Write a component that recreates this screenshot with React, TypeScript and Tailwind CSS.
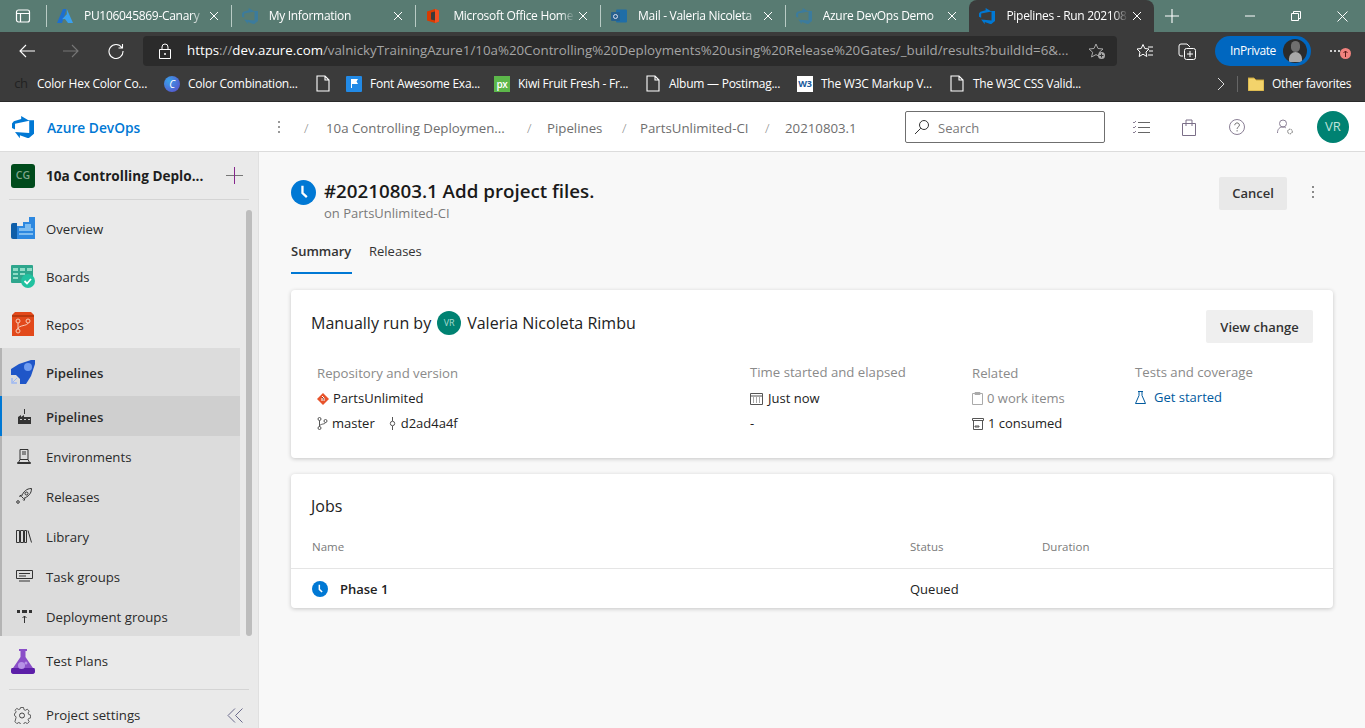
import React from "react";

const Clock = ({ size }: { size: number }) => (
  <svg width={size} height={size} viewBox="0 0 24 24" className="shrink-0">
    <circle cx="12" cy="12" r="12" fill="#0078d4" />
    <path d="M11 5.5v7l4.2 4" stroke="#fff" strokeWidth="2.2" fill="none" />
  </svg>
);

const DevOps = ({ size, color = "#0078d4" }: { size: number; color?: string }) => (
  <svg width={size} height={size} viewBox="0 0 24 24" className="shrink-0">
    <path fill={color} d="M24 4.5v14.9l-6 5-9.4-3.4v3.3l-5.3-6.9 15.5 1.2V4.5zM18.8 5.3 10 0v3.3L2 5.7 0 8.3v4.9l3.3 1.5V8.4z" />
  </svg>
);

const FileIcon = () => (
  <svg width="14" height="17" viewBox="0 0 14 17" className="shrink-0">
    <path d="M1 1h8l4 4v11H1z M9 1v4h4" fill="none" stroke="#fff" strokeWidth="1.1" />
  </svg>
);

const Tab = ({ icon, label, active }: { icon: React.ReactNode; label: string; active?: boolean }) => (
  <div className={`relative flex h-8 w-[184.7px] shrink-0 items-center pl-[10px] ${active ? "rounded-t-lg bg-[#3b3b3b]" : "border-l border-[#a9bdb7]/70 [border-image:linear-gradient(transparent_18%,#b9cbc5_18%,#b9cbc5_82%,transparent_82%)_1]"}`}>
    <span className={`flex shrink-0 justify-start ${active ? "w-[27px]" : "w-[17px]"}`}>{icon}</span>
    <span className={`w-[122px] overflow-hidden whitespace-nowrap text-[12px] tracking-[-0.3px] text-white [mask-image:linear-gradient(90deg,#000_88%,transparent)] ${active ? "" : "ml-[10px]"}`}>{label}</span>
    <svg width="10" height="10" viewBox="0 0 10 10" className="ml-auto mr-[12px] shrink-0">
      <path d="M1 1l8 8M9 1l-8 8" stroke="#fff" strokeWidth="1" />
    </svg>
  </div>
);

const Bookmark = ({ icon, label, w }: { icon: React.ReactNode; label: string; w: number }) => (
  <div className="flex items-center gap-[8px] whitespace-nowrap text-[12px] tracking-[-0.25px] text-white" style={{ width: w }}>
    <span className="flex w-[16px] shrink-0 justify-center">{icon}</span>
    <span>{label}</span>
  </div>
);

const NavItem = ({ icon, label, bold }: { icon: React.ReactNode; label: string; bold?: boolean }) => (
  <div className="flex h-[48px] items-center pl-[11px]">
    <span className="flex w-[24px] shrink-0 justify-center">{icon}</span>
    <span className={`ml-[11px] mt-[4px] text-[13.2px] text-[#2b2b2b] ${bold ? "font-semibold" : ""}`}>{label}</span>
  </div>
);

const SubItem = ({ icon, label, selected }: { icon: React.ReactNode; label: string; selected?: boolean }) => (
  <div className={`flex h-[40px] items-center border-l-2 pl-[12px] ${selected ? "border-[#0078d4] bg-[#cfcfcf]" : "border-[#b4b4b4]"}`}>
    <span className="flex w-[20px] shrink-0 justify-center">{icon}</span>
    <span className={`ml-[12px] mt-[4px] text-[13.2px] text-[#2b2b2b] ${selected ? "font-semibold" : ""}`}>{label}</span>
  </div>
);

const stroke = { fill: "none", stroke: "#333", strokeWidth: 1 };

const App = () => (
  <div className="flex h-[728px] w-[1365px] flex-col overflow-hidden bg-[#f8f8f8] font-['Open_Sans',sans-serif]">
    {/* tab strip */}
    <div className="flex h-8 shrink-0 items-center bg-[#587b72] text-white">
      <div className="flex w-[46px] shrink-0 justify-center">
        <svg width="16" height="16" viewBox="0 0 16 16">
          <rect x="1.5" y="2" width="13" height="12" rx="2" fill="none" stroke="#fff" strokeWidth="1.2" />
          <path d="M2 5.5h12M5.5 5.5V14" stroke="#fff" strokeWidth="1.2" fill="none" />
        </svg>
      </div>
      <Tab label="PU106045869-Canary" icon={<svg width="16" height="16" viewBox="0 0 16 16"><path d="M6 1h3.5L5 15H0z" fill="#1d6fd0" /><path d="M9.8 1 16 15h-5L8 11l-3 .2 4.8-5z" fill="#3aa0f0" /></svg>} />
      <Tab label="My Information" icon={<span className="opacity-60"><DevOps size={16} color="#2a7cb8" /></span>} />
      <Tab label="Microsoft Office Home" icon={<svg width="14" height="16" viewBox="0 0 14 16"><path d="M1 3.5 9 1l4 1.5v11L9 15l-8-2.5z" fill="#d83b01" /><path d="M5 4.5 9 3.5v9l-4-1z" fill="#3b3b3b" /><path d="M9 1l4 1.5v11L9 15z" fill="#f25022" /></svg>} />
      <Tab label="Mail - Valeria Nicoleta" icon={<svg width="16" height="16" viewBox="0 0 16 16"><rect x="5" y="1.5" width="11" height="13" rx="1" fill="#1f6ea8" /><rect x="0" y="4" width="9" height="9" rx="1" fill="#28618e" /><circle cx="4.5" cy="8.5" r="2" fill="none" stroke="#dde" strokeWidth="1" /></svg>} />
      <Tab label="Azure DevOps Demo" icon={<span className="opacity-60"><DevOps size={16} color="#2a7cb8" /></span>} />
      <Tab active label="Pipelines - Run 202108" icon={<DevOps size={16} />} />
      <div className="flex w-[36px] shrink-0 justify-center">
        <svg width="14" height="14" viewBox="0 0 14 14"><path d="M7 0v14M0 7h14" stroke="#fff" strokeWidth="1.1" /></svg>
      </div>
      <div className="ml-auto flex items-center">
        <span className="flex w-[46px] justify-center"><svg width="10" height="10" viewBox="0 0 10 10"><path d="M0 5h10" stroke="#fff" /></svg></span>
        <span className="flex w-[46px] justify-center"><svg width="10" height="10" viewBox="0 0 10 10"><path d="M.5 2.5h7v7h-7zM2.5 2.5v-2h7v7h-2" stroke="#fff" fill="none" /></svg></span>
        <span className="flex w-[46px] justify-center"><svg width="11" height="11" viewBox="0 0 11 11"><path d="M.5.5l10 10M10.5.5l-10 10" stroke="#fff" /></svg></span>
      </div>
    </div>

    {/* toolbar */}
    <div className="flex h-[34px] shrink-0 items-center bg-[#3b3b3b] pt-[4px]">
      <div className="flex w-[143px] shrink-0 items-center">
        <span className="flex w-[53px] justify-center"><svg width="16" height="14" viewBox="0 0 16 14"><path d="M16 7H1M7 1 1 7l6 6" stroke="#fff" fill="none" strokeWidth="1.1" /></svg></span>
        <span className="flex w-[36px] justify-center"><svg width="16" height="14" viewBox="0 0 16 14"><path d="M0 7h15M9 1l6 6-6 6" stroke="#777" fill="none" strokeWidth="1.1" /></svg></span>
        <span className="flex w-[54px] justify-center"><svg width="16" height="16" viewBox="0 0 16 16"><path d="M13.8 4.5A7 7 0 1 0 15 8M14.5 1v4h-4" stroke="#fff" fill="none" strokeWidth="1.1" /></svg></span>
      </div>
      <div className="flex h-[30px] w-[974px] shrink-0 items-center rounded-[4px] bg-[#2b2b2b] pl-[16px]">
        <svg width="12" height="16" viewBox="0 0 12 16" className="shrink-0"><path d="M3 6V4a3 3 0 0 1 6 0v2M.5 6.5h11v9H.5z" stroke="#fff" fill="none" /><circle cx="6" cy="11" r="1" fill="#fff" /></svg>
        <span className="ml-[16px] w-[890px] overflow-hidden whitespace-nowrap text-[13.3px] text-[#a5a5a5]">
          <span className="text-white">https</span>://<span className="text-white">dev.azure.com</span>/valnickyTrainingAzure1/10a%20Controlling%20Deployments%20using%20Release%20Gates/_build/results?buildId=6&amp;...
        </span>
        <svg width="18" height="18" viewBox="0 0 18 18" className="ml-auto mr-[11px] shrink-0"><path d="M8 2l2 4.5 5 .5-3.700 3.300L12.500 15 8 12.600 3.500 15l1.200-4.700L1 7l5-.5z" stroke="#aaa" fill="none" /><circle cx="13.500" cy="13.500" r="3.500" fill="#aaa" /><path d="M11.500 13.500h4M13.500 11.500v4" stroke="#333" /></svg>
      </div>
      <span className="ml-[19px] flex w-[18px] justify-center">
        <svg width="18" height="16" viewBox="0 0 18 16"><path d="M7 1.500l1.800 4 4.200.5-3 3 .8 4.500L7 11.200 3.200 13.500 4 9 1 6l4.200-.5z" stroke="#fff" fill="none" /><path d="M12 4h5M13 8h4M12 12h5" stroke="#fff" /></svg>
      </span>
      <span className="ml-[24px] flex w-[18px] justify-center">
        <svg width="18" height="17" viewBox="0 0 18 17"><path d="M5 13H3a2 2 0 0 1-2-2V3a2 2 0 0 1 2-2h6l3 3" stroke="#fff" fill="none" /><rect x="6.500" y="5.500" width="11" height="11" rx="2" stroke="#fff" fill="none" /><path d="M12 8v6M9 11h6" stroke="#fff" /></svg>
      </span>
      <div className="ml-[19px] flex h-[30px] w-[96px] items-center rounded-full bg-[#0067c0] pl-[15px] pr-[4px]">
        <span className="text-[12px] tracking-[-0.4px] text-white">InPrivate</span>
        <span className="ml-auto flex h-[24px] w-[24px] flex-col items-center justify-center overflow-hidden rounded-full bg-[#2b2b2b]">
          <span className="h-[11px] w-[9px] rounded-full bg-[#6f6f6f]" />
          <span className="h-[10px] w-[13px] rounded-t-full bg-[#a8a8a8]" />
        </span>
      </div>
      <div className="relative ml-[19px] flex h-[20px] w-[14px] items-center gap-[2px]">
        <span className="h-[2px] w-[2px] rounded-full bg-white" />
        <span className="h-[2px] w-[2px] rounded-full bg-white" />
        <span className="h-[2px] w-[2px] rounded-full bg-white" />
        <span className="absolute left-[10px] top-[7px] flex h-[11px] w-[11px] items-center justify-center rounded-full bg-[#f1827e]">
          <svg width="7" height="7" viewBox="0 0 7 7"><path d="M3.500 7V1M1.500 3l2-2 2 2" stroke="#5a1a18" fill="none" /></svg>
        </span>
      </div>
    </div>

    {/* bookmarks */}
    <div className="flex h-[36px] shrink-0 items-center border-b border-[#2a2a2a] bg-[#3b3b3b] pl-[13px]">
      <Bookmark w={151} label="Color Hex Color Co..." icon={<span className="text-[13px] leading-none text-[#222]">ch</span>} />
      <Bookmark w={152} label="Color Combination..." icon={<span className="flex h-[16px] w-[16px] items-center justify-center rounded-full bg-[radial-gradient(circle_at_30%_30%,#3aa0e8,#5a48c8)] text-[10px] italic leading-none text-white">C</span>} />
      <span className="mr-[16px] flex w-[14px] justify-center"><FileIcon /></span>
      <Bookmark w={148} label="Font Awesome Exa..." icon={<span className="flex h-[16px] w-[16px] items-center justify-center rounded-[1px] bg-[#228ae6]"><svg width="9" height="9" viewBox="0 0 9 9"><path d="M1 0h7L6.500 2.500 8 5H2v4H1z" fill="#fff" /></svg></span>} />
      <Bookmark w={151} label="Kiwi Fruit Fresh - Fr..." icon={<span className="flex h-[16px] w-[16px] items-center justify-center bg-[#5cb74a] text-[10px] font-semibold leading-none text-white">px</span>} />
      <span className="mr-[8px] flex w-[16px] justify-center"><FileIcon /></span>
      <div className="w-[128px] whitespace-nowrap text-[12px] tracking-[-0.25px] text-white">Album — Postimag...</div>
      <Bookmark w={152} label="The W3C Markup V..." icon={<span className="flex h-[16px] w-[16px] items-center justify-center bg-white text-[9px] font-bold leading-none text-[#1a5a9c]">W3</span>} />
      <span className="mr-[8px] flex w-[16px] justify-center"><FileIcon /></span>
      <div className="w-[244px] whitespace-nowrap text-[12px] tracking-[-0.25px] text-white">The W3C CSS Valid...</div>
      <svg width="8" height="12" viewBox="0 0 8 12" className="shrink-0"><path d="M1 0l6 6-6 6" stroke="#ddd" fill="none" /></svg>
      <span className="ml-[12px] h-[16px] w-[1px] bg-[#666]" />
      <span className="ml-[10px]"><svg width="16" height="14" viewBox="0 0 16 14" className="block"><path d="M0 1h6l2 2h8v11H0z" fill="#f3d36b" stroke="#c9a53b" /></svg></span>
      <span className="ml-[8px] whitespace-nowrap text-[12px] tracking-[-0.35px] text-white">Other favorites</span>
    </div>

    {/* azure header */}
    <div className="flex h-[50px] shrink-0 items-center border-b border-[#dcdcdc] bg-white pt-[1px]">
      <div className="flex w-[272px] shrink-0 items-center pl-[12px]">
        <DevOps size={22} />
        <span className="ml-[13px] mt-[2px] text-[13.75px] font-semibold text-[#0078d4]">Azure DevOps</span>
      </div>
      <svg width="4" height="14" viewBox="0 0 4 14" className="ml-[5px] shrink-0"><circle cx="2" cy="2" r="1" fill="#777" /><circle cx="2" cy="7" r="1" fill="#777" /><circle cx="2" cy="12" r="1" fill="#777" /></svg>
      <div className="ml-[23px] mt-[4px] flex w-[601px] shrink-0 items-center whitespace-nowrap text-[13.25px] text-[#6e6e6e]">
        <span className="w-[22px] font-light text-[#888]">/</span>
        <span className="w-[201px]">10a Controlling Deploymen...</span>
        <span className="w-[20px] font-light text-[#888]">/</span>
        <span className="w-[75px]">Pipelines</span>
        <span className="w-[18px] font-light text-[#888]">/</span>
        <span className="w-[125px]">PartsUnlimited-CI</span>
        <span className="w-[20px] font-light text-[#888]">/</span>
        <span>20210803.1</span>
      </div>
      <div className="flex h-[32px] w-[200px] shrink-0 items-center rounded-[2px] border border-[#6f6f6f] pl-[8px]">
        <svg width="16" height="16" viewBox="0 0 16 16"><circle cx="10" cy="6" r="4.500" stroke="#333" fill="none" /><path d="M6.800 9.200 1 15" stroke="#333" /></svg>
        <span className="ml-[8px] mt-[3px] text-[13px] text-[#7a7a7a]">Search</span>
      </div>
      <span className="ml-[28px] flex w-[17px] justify-center"><svg width="17" height="13" viewBox="0 0 17 13"><path d="M5 1.500h12M5 6.500h12M5 11.500h12" stroke="#666" /><path d="M0 1l1 1 2-2M0 6l1 1 2-2M0 11l1 1 2-2" stroke="#8a7f95" fill="none" /></svg></span>
      <span className="ml-[32px] flex w-[14px] justify-center"><svg width="14" height="17" viewBox="0 0 14 17"><path d="M.5 4.500h13v12H.5zM4 7V1h6v6" stroke="#7b6f88" fill="none" /></svg></span>
      <span className="ml-[33px] flex w-[16px] justify-center"><svg width="16" height="16" viewBox="0 0 16 16"><circle cx="8" cy="8" r="7.500" stroke="#8a7f95" fill="none" /><path d="M5.800 6.200c0-3 4.600-3 4.600 0 0 1.800-2.300 1.800-2.300 3.600M8.100 11.200v1.200" stroke="#666" fill="none" /></svg></span>
      <span className="ml-[32px] flex w-[17px] justify-center"><svg width="17" height="16" viewBox="0 0 17 16"><circle cx="6" cy="4.500" r="3.500" stroke="#8a7f95" fill="none" /><path d="M.5 14c0-4 2-6 5.500-6 1 0 2 .3 2.800.8" stroke="#8a7f95" fill="none" /><circle cx="13" cy="12.500" r="2.300" stroke="#666" fill="none" strokeDasharray="1.500 .6" /></svg></span>
      <span className="ml-[23px] flex h-[32px] w-[32px] items-center justify-center rounded-full bg-[#008272] text-[13px] text-[#bfe3db]">VR</span>
    </div>

    <div className="flex min-h-0 flex-1">
      {/* sidebar */}
      <aside className="flex w-[259px] shrink-0 flex-col border-r border-[#e0e0e0] bg-[#eaeaea]">
        <div className="flex h-[47px] shrink-0 items-center pl-[11px]">
          <span className="flex h-[24px] w-[24px] items-center justify-center rounded-[3px] bg-[#004b1c] text-[10.5px] font-semibold text-[#7fa58c]">CG</span>
          <span className="ml-[11px] mt-[2px] whitespace-nowrap text-[13.6px] font-bold text-[#1e1e1e]">10a Controlling Deplo...</span>
          <svg width="17" height="17" viewBox="0 0 17 17" className="ml-auto mr-[15px]"><path d="M0 8.500h17" stroke="#777" /><path d="M8.500 0v17" stroke="#86268c" /></svg>
        </div>
        <div className="mx-[9px] h-[1px] shrink-0 bg-[#d4d4d4]" />
        <div className="flex h-[436px] shrink-0">
          <div className="w-[240px] shrink-0 pt-[4px]">
            <NavItem label="Overview" icon={<svg width="24" height="22" viewBox="0 0 24 22"><path d="M0 8a2 2 0 0 1 2-2h4v16H2a2 2 0 0 1-2-2z" fill="#0f5ea8" /><path d="M6 9h6V5h6V0h6v22H6z" fill="#2d88e0" /><path d="M8 11h6V7h6v4h2v3H8zM8 16h14v2H8z" fill="#7fbdf0" /></svg>} />
            <NavItem label="Boards" icon={<svg width="24" height="24" viewBox="0 0 24 24"><rect x="0" y="1" width="22" height="18" rx="1" fill="#2ea68d" /><path d="M2 4h5v3H2zM9 4h5v3H9zM16 4h5v3h-5zM2 9h5v2H2zM9 9h5v2H9zM2 13h5v2H2z" fill="#8fdcc6" /><circle cx="17" cy="17" r="7" fill="#21c2a0" /><path d="M13.500 17l2.500 2.500 4-4.500" stroke="#fff" strokeWidth="1.800" fill="none" /></svg>} />
            <NavItem label="Repos" icon={<svg width="22" height="24" viewBox="0 0 22 24"><path d="M3 0h16l3 3v21H0V3z" fill="#e2491b" /><path d="M0 3h22v2H0z" fill="#b8390f" /><circle cx="6" cy="9" r="2" stroke="#f8cdb8" fill="none" /><circle cx="16" cy="9" r="2" stroke="#f8cdb8" fill="none" /><circle cx="6" cy="19" r="2" stroke="#f8cdb8" fill="none" /><path d="M6 11v6M16 11c0 3-10 2-10 6" stroke="#f8cdb8" fill="none" /></svg>} />
            <div className="bg-[#dcdcdc]">
              <div className="flex h-[48px] items-center border-l-2 border-[#b4b4b4] pl-[9px]">
                <span className="flex w-[24px] shrink-0 justify-center"><svg width="24" height="24" viewBox="0 0 24 24"><path d="M0 9 8 4 20 0h4v4l-4 12-5 8H9v-5l-4-4H0z" fill="#1f56c8" /><circle cx="17" cy="7" r="4" fill="#6f9cf0" /><path d="M1 18v5h5" stroke="#9db8f2" fill="none" strokeWidth="1.500" /><path d="M1.500 22.500 6 18" stroke="#9db8f2" /></svg></span>
                <span className="ml-[11px] mt-[4px] text-[13.2px] font-semibold text-[#2b2b2b]">Pipelines</span>
              </div>
              <SubItem selected label="Pipelines" icon={<svg width="15" height="15" viewBox="0 0 15 15"><path d="M7 0h1v5H7zM1 8l3-2v2l3-2v2h7v7H1z" fill="#333" /><path d="M3 10h2v1H3zM7 10h2v1H7zM11 10h2v1h-2z" fill="#ccc" /></svg>} />
              <SubItem label="Environments" icon={<svg width="14" height="15" viewBox="0 0 14 15" {...stroke}><path d="M3 .5h8v10H3zM.5 13.500h13v1H.5zM3 10.500l-1.500 3M11 10.500l1.500 3M5 3h4M5 5h4" /></svg>} />
              <SubItem label="Releases" icon={<svg width="16" height="16" viewBox="0 0 16 16" {...stroke}><path d="M15.500.5c-5 0-8 3-10 8l2 2c5-2 8-5 8-10zM5.500 7l-2 1 1 1M9 10.500l-1 2-1-1" /><circle cx="10.500" cy="5.500" r="1.500" /><circle cx="2" cy="14" r="1.300" /></svg>} />
              <SubItem label="Library" icon={<svg width="16" height="13" viewBox="0 0 16 13" {...stroke}><path d="M.5.500h3v12h-3zM4.500.500h3v12h-3zM8.500.500h2v12h-2zM12 .500l3.500 12" /></svg>} />
              <SubItem label="Task groups" icon={<svg width="17" height="12" viewBox="0 0 17 12"><path d="M.5.500h16v8H.5z" fill="none" stroke="#333" /><path d="M3 3.500h11M3 6h7M3 11h11" stroke="#333" /></svg>} />
              <SubItem label="Deployment groups" icon={<svg width="15" height="13" viewBox="0 0 15 13"><path d="M0 0h3v3H0zM5 0h5v3H5zM12 0h3v3h-3z" fill="#333" /><path d="M7.500 13V6M5.500 8l2-2 2 2" stroke="#333" fill="none" /></svg>} />
            </div>
          </div>
          <div className="ml-[6px] mt-[10px] h-[426px] w-[6px] rounded-full bg-[#bdbdbd]" />
        </div>
        <div className="flex h-[53px] shrink-0 items-center pb-[2px] pl-[11px]">
          <svg width="24" height="25" viewBox="0 0 24 25"><path d="M8 0h8v2h-1.500v6L24 22q0 3-3 3H3q-3 0-3-3L9.500 8V2H8z" fill="#8a4fc8" /><path d="M.6 19h22.800q.6 1 .6 3 0 3-3 3H3q-3 0-3-3 0-2 .6-3z" fill="#5c1fa8" /><circle cx="10.500" cy="16.500" r="3.500" fill="#b692e6" /><circle cx="15" cy="14" r="1.500" fill="#b692e6" /></svg>
          <span className="ml-[11px] text-[13.2px] text-[#2b2b2b]">Test Plans</span>
        </div>
        <div className="mx-[9px] h-[1px] shrink-0 bg-[#d4d4d4]" />
        <div className="flex h-[50px] shrink-0 items-center pl-[14px]">
          <svg width="17" height="17" viewBox="0 0 17 17"><path d="M7 .5h3l.5 2.300 1.500.7 2-1.200 2 2-1.200 2 .7 1.600 2 .6v3l-2 .5-.7 1.500 1.200 2-2 2-2-1.200-1.500.7-.5 2H7l-.5-2-1.500-.7-2 1.200-2-2L2.200 11l-.7-1.500-1-.5v-2l1-.5.7-1.600L1 3.500l2-2 2 1.200 1.500-.7z" transform="scale(.95)" fill="none" stroke="#444" strokeWidth=".9" /><circle cx="8" cy="8.500" r="2.500" fill="none" stroke="#444" /></svg>
          <span className="ml-[15px] mt-[2px] text-[13.2px] text-[#2b2b2b]">Project settings</span>
          <svg width="16" height="15" viewBox="0 0 16 15" className="ml-auto mr-[15px]"><path d="M8 .5 1 7.500l7 7M15.500.5l-7 7 7 7" stroke="#6b6b8c" fill="none" /></svg>
        </div>
      </aside>

      {/* main */}
      <main className="min-w-0 flex-1 px-[32px] pt-[28px]">
        <div className="flex items-start">
          <Clock size={25} />
          <div className="ml-[8px] -mt-[2px]">
            <div className="text-[18.75px] font-semibold leading-[26px] text-[#1a1a1a]">#20210803.1 Add project files.</div>
            <div className="text-[13px] leading-[18px] text-[#7a7a7a]">on PartsUnlimited-CI</div>
          </div>
          <button className="-mt-[3px] ml-auto h-[33px] w-[68px] rounded-[2px] bg-[#e9e9e9] text-[13px] font-semibold text-[#333]">Cancel</button>
          <svg width="4" height="14" viewBox="0 0 4 14" className="ml-[24px] mr-[18px] mt-[5px]"><circle cx="2" cy="2" r="1" fill="#666" /><circle cx="2" cy="7" r="1" fill="#666" /><circle cx="2" cy="12" r="1" fill="#666" /></svg>
        </div>
        <div className="mt-[15px] flex items-start text-[13px]">
          <div className="h-[37px] w-[61px] border-b-2 border-[#0078d4] pt-[5px] font-semibold text-[#333]">Summary</div>
          <div className="ml-[17px] pt-[5px] text-[#333]">Releases</div>
        </div>
        <section className="mt-[16px] h-[168px] rounded-[4px] bg-white px-[20px] pt-[20px] shadow-[0_1px_4px_rgba(0,0,0,0.2)]">
          <div className="flex items-start justify-between">
            <div className="mt-[1px] flex items-center text-[16px] text-[#222]">
              <span>Manually run by</span>
              <span className="ml-[6px] flex h-[24px] w-[24px] items-center justify-center rounded-full bg-[#008272] text-[9px] text-[#a8dcd0]">VR</span>
              <span className="ml-[6px]">Valeria Nicoleta Rimbu</span>
            </div>
            <button className="h-[33px] w-[107px] rounded-[2px] bg-[#efefef] pt-[2px] text-[13px] font-semibold text-[#333]">View change</button>
          </div>
          <div className="mt-[18px] flex text-[13px] leading-[25px] text-[#222]">
            <div className="ml-[6px] w-[433px]">
              <div className="text-[13.2px] text-[#8a8a8a]">Repository and version</div>
              <div className="flex items-center">
                <svg width="12" height="12" viewBox="0 0 12 12" className="mr-[4px]"><path d="M6 0l6 6-6 6-6-6z" fill="#e8532b" /><path d="M5 3l2 2v3M5 5v3" stroke="#fff" /></svg>
                PartsUnlimited
              </div>
              <div className="flex items-center">
                <svg width="11" height="13" viewBox="0 0 11 13" className="mr-[4px]"><circle cx="2.500" cy="2" r="1.500" fill="none" stroke="#555" /><circle cx="2.500" cy="11" r="1.500" fill="none" stroke="#555" /><circle cx="8.500" cy="4" r="1.500" fill="none" stroke="#555" /><path d="M2.500 3.500v6M8.500 5.500c0 2-6 1-6 4" stroke="#555" fill="none" /></svg>
                master
                <svg width="7" height="13" viewBox="0 0 7 13" className="ml-[14px] mr-[5px]"><circle cx="3.500" cy="6.500" r="2.200" fill="none" stroke="#555" /><path d="M3.500 0v4M3.500 9v4" stroke="#555" /></svg>
                d2ad4a4f
              </div>
            </div>
            <div className="w-[222px]">
              <div className="-mt-[1px] text-[13.2px] text-[#8a8a8a]">Time started and elapsed</div>
              <div className="mt-[1px] flex items-center">
                <svg width="13" height="13" viewBox="0 0 13 13" className="mr-[5px]"><path d="M.5 1.500h12v11H.5zM.5 4h12" fill="none" stroke="#555" /><path d="M3 6h1M6 6h1M9 6h1M3 8h1M6 8h1M9 8h1M3 10h1M6 10h1M9 10h1" stroke="#555" /></svg>
                Just now
              </div>
              <div>-</div>
            </div>
            <div className="w-[163px]">
              <div className="text-[13.2px] text-[#8a8a8a]">Related</div>
              <div className="flex items-center text-[#8a8a8a]">
                <svg width="11" height="13" viewBox="0 0 11 13" className="mr-[4px]"><path d="M.5 1.500h10v11H.5zM3 .5h5v2H3z" fill="none" stroke="#aaa" /></svg>
                0 work items
              </div>
              <div className="flex items-center">
                <svg width="12" height="12" viewBox="0 0 12 12" className="mr-[4px]"><path d="M.5.5h11v2H.5zM1.500 2.500v9h9v-9M3 8h4v1H3z" fill="none" stroke="#555" /></svg>
                1 consumed
              </div>
            </div>
            <div>
              <div className="-mt-[1px] text-[13.2px] text-[#8a8a8a]">Tests and coverage</div>
              <div className="flex items-center text-[#005a9e]">
                <svg width="11" height="13" viewBox="0 0 11 13" className="mr-[8px]"><path d="M3 .5h5M4 .5v4L.5 12.500h10L7 4.500v-4" fill="none" stroke="#005a9e" /></svg>
                Get started
              </div>
            </div>
          </div>
        </section>
        <section className="mt-[16px] h-[134px] rounded-[4px] bg-white shadow-[0_1px_4px_rgba(0,0,0,0.2)]">
          <div className="pl-[20px] pt-[20px] text-[16px] leading-[24px] text-[#222]">Jobs</div>
          <div className="mt-[20px] flex h-[31px] border-b border-[#e5e5e5] text-[11.5px] text-[#7a7a7a]">
            <span className="ml-[21px] w-[598px]">Name</span>
            <span className="w-[132px]">Status</span>
            <span>Duration</span>
          </div>
          <div className="flex h-[39px] items-center text-[13px] text-[#222]">
            <span className="ml-[21px]"><Clock size={16} /></span>
            <span className="ml-[12px] mt-[2px] w-[570px] font-semibold">Phase 1</span>
            <span className="mt-[2px]">Queued</span>
          </div>
        </section>
      </main>
    </div>
  </div>
);

export default App;
